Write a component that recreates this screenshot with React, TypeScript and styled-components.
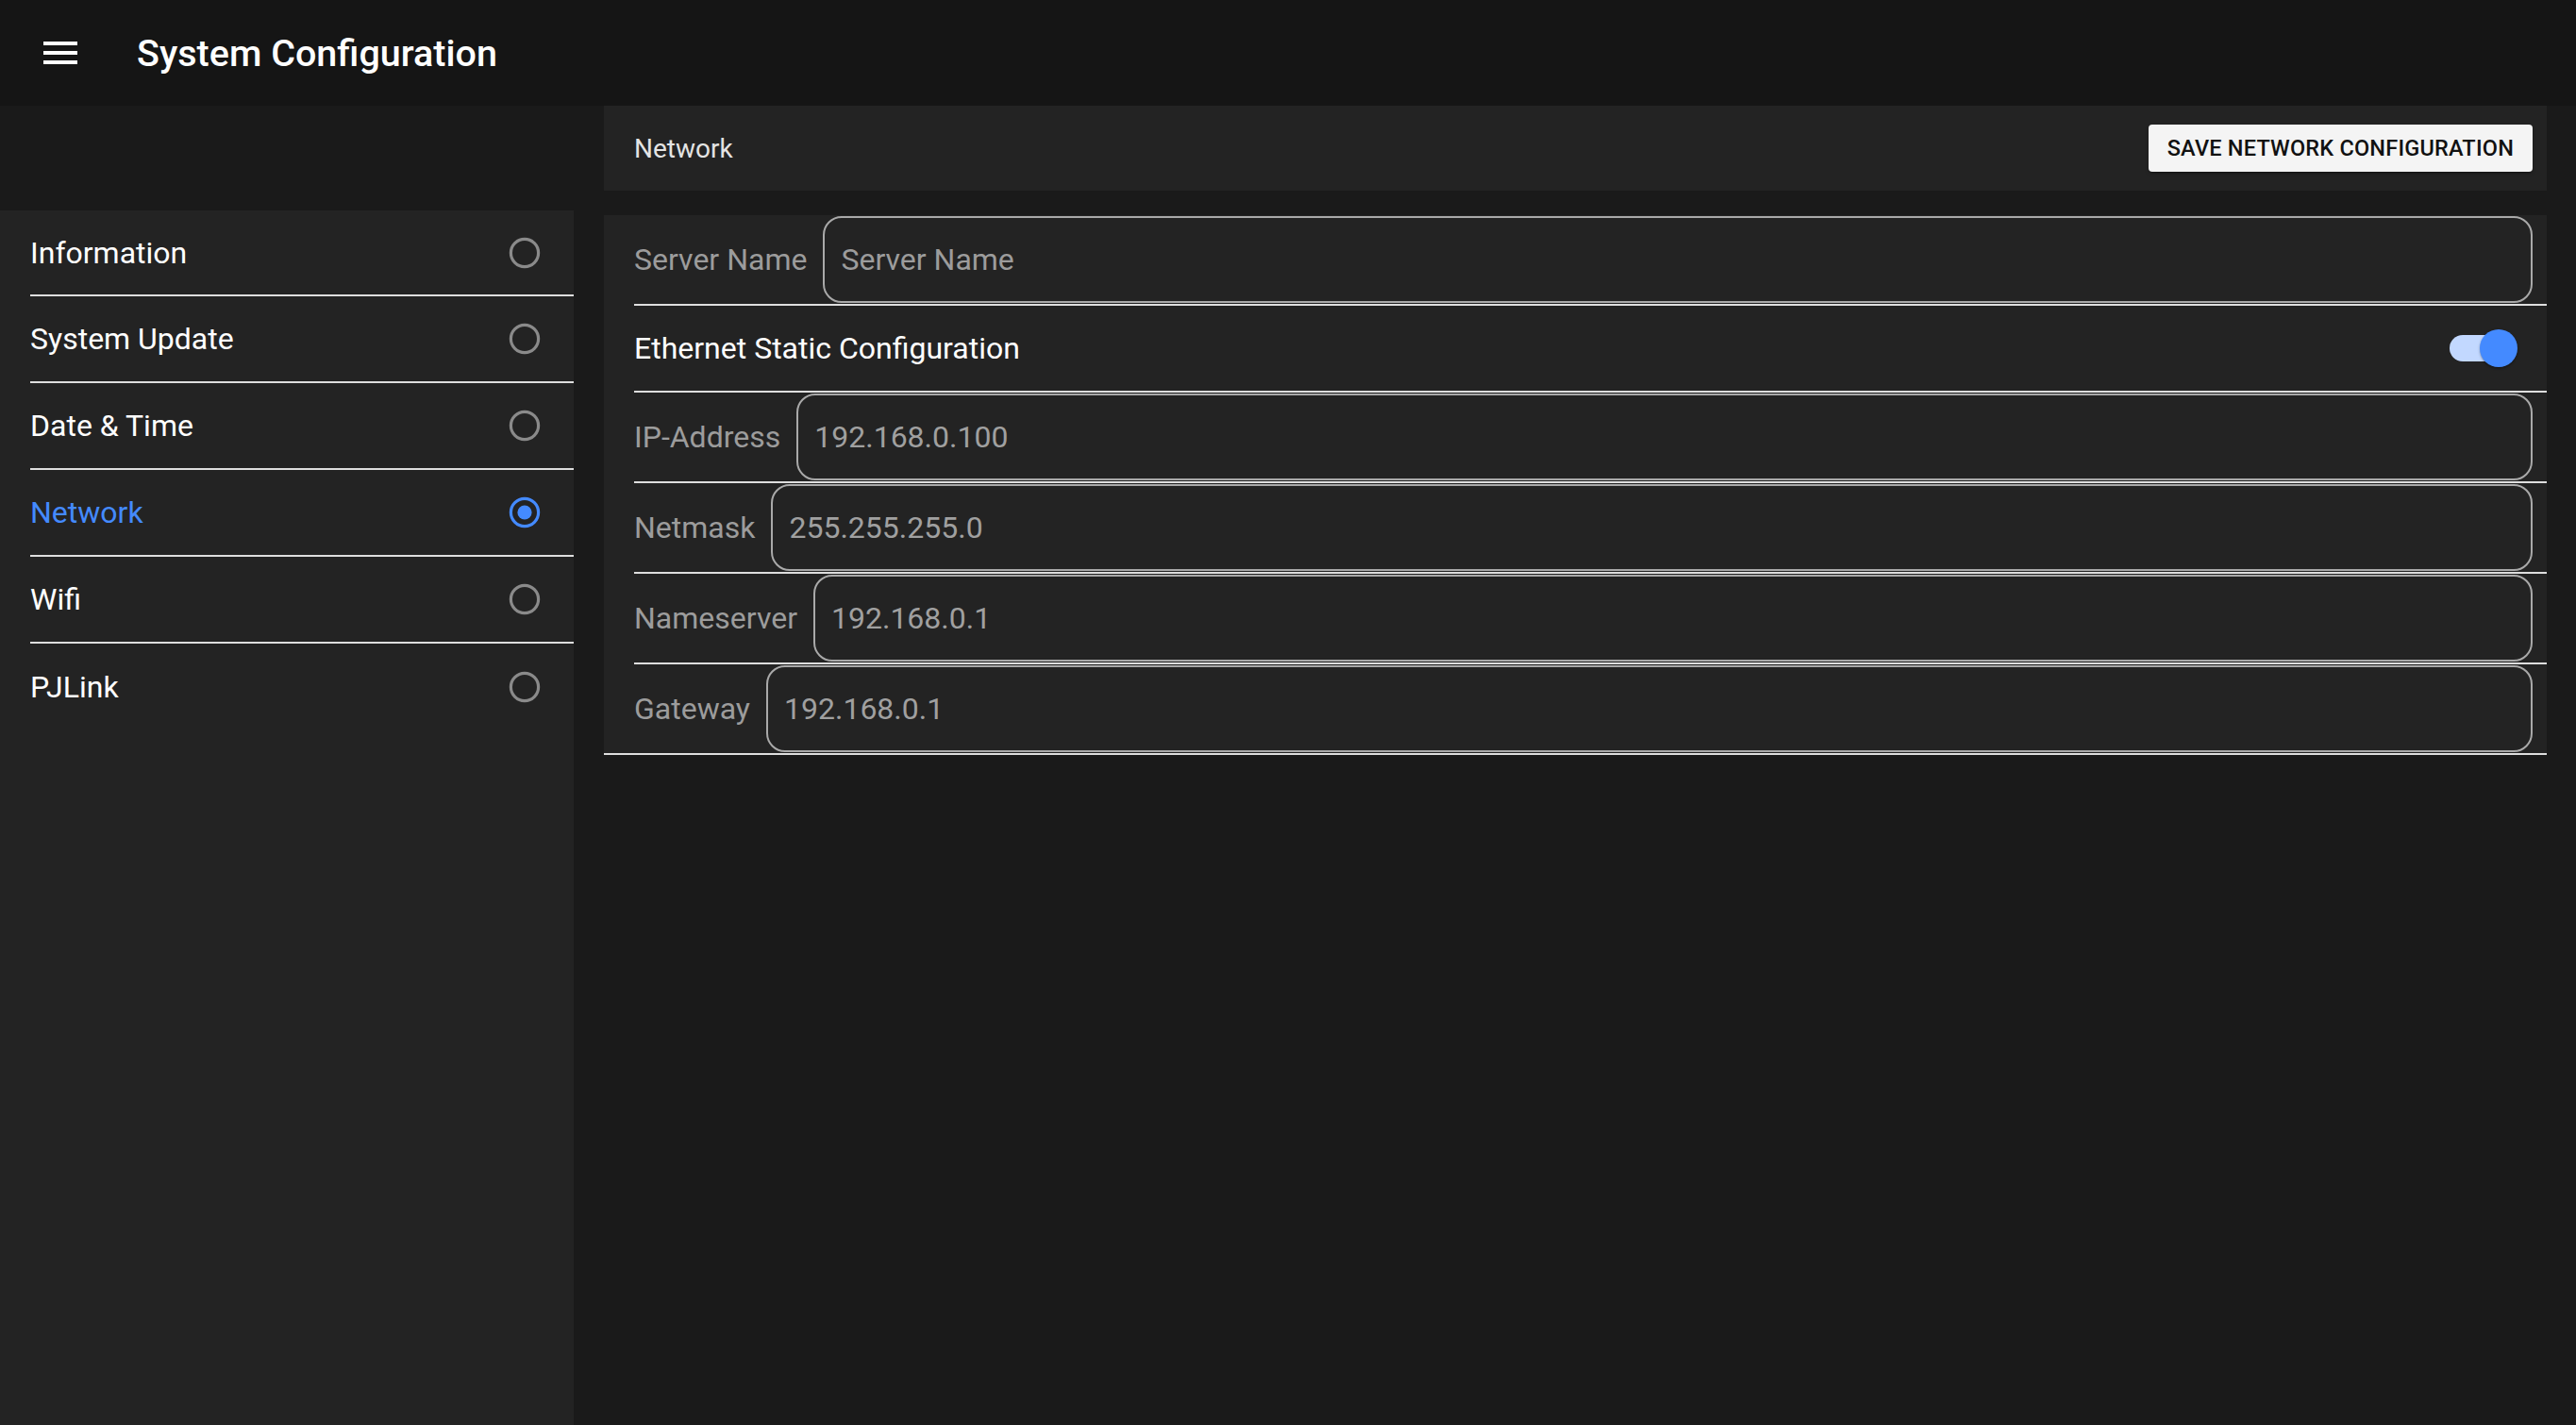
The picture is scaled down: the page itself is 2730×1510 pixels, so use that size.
import React from 'react';
import styled, { createGlobalStyle } from 'styled-components';

const GlobalStyle = createGlobalStyle`
	* {
		box-sizing: border-box;
	}
	body {
		margin: 0;
		background: #1a1a1a;
		font-family: Roboto, 'Liberation Sans', sans-serif;
		color: #ffffff;
	}
`;

const menuItems = ['Information', 'System Update', 'Date & Time', 'Network', 'Wifi', 'PJLink'];

const networkFields = [
	{ label: 'IP-Address', value: '192.168.0.100' },
	{ label: 'Netmask', value: '255.255.255.0' },
	{ label: 'Nameserver', value: '192.168.0.1' },
	{ label: 'Gateway', value: '192.168.0.1' },
];

function RadioIcon({ checked }: { checked: boolean }) {
	const color = checked ? '#448aff' : '#8a8a8a';
	return (
		<svg width="40" height="40" viewBox="0 0 40 40">
			<circle cx="20" cy="20" r="14.6" fill="none" stroke={color} strokeWidth="3.2" />
			{checked && <circle cx="20" cy="20" r="7.6" fill={color} />}
		</svg>
	);
}

export default function App() {
	const active = 'Network';

	return (
		<Page>
			<GlobalStyle />
			<AppBar>
				<MenuButton aria-label="menu">
					<svg width="48" height="48" viewBox="0 0 24 24" fill="#ffffff">
						<path d="M3 18h18v-2H3v2zm0-5h18v-2H3v2zm0-7v2h18V6H3z" />
					</svg>
				</MenuButton>
				<Title>System Configuration</Title>
			</AppBar>
			<Body>
				<Sidebar>
					{menuItems.map((item) => (
						<MenuItem key={item}>
							<MenuText $active={item === active}>{item}</MenuText>
							<RadioIcon checked={item === active} />
						</MenuItem>
					))}
				</Sidebar>
				<Main>
					<PanelHeader>
						<PanelTitle>Network</PanelTitle>
						<SaveButton>Save Network Configuration</SaveButton>
					</PanelHeader>
					<FormPanel>
						<FieldRow>
							<FieldLabel>Server Name</FieldLabel>
							<FieldInput type="text" placeholder="Server Name" />
						</FieldRow>
						<ToggleRow>
							<ToggleLabel>Ethernet Static Configuration</ToggleLabel>
							<Switch>
								<SwitchTrack />
								<SwitchThumb />
							</Switch>
						</ToggleRow>
						{networkFields.map((field) => (
							<FieldRow key={field.label}>
								<FieldLabel>{field.label}</FieldLabel>
								<FieldInput type="text" defaultValue={field.value} />
							</FieldRow>
						))}
					</FormPanel>
				</Main>
			</Body>
		</Page>
	);
}

const Page = styled.div`
	min-height: 100vh;
	display: flex;
	flex-direction: column;
`;

const AppBar = styled.header`
	height: 112px;
	flex-shrink: 0;
	display: flex;
	align-items: center;
	padding-left: 40px;
	background: #151515;
`;

const MenuButton = styled.div`
	width: 48px;
	height: 48px;
	display: flex;
	margin-top: -1px;
`;

const Title = styled.div`
	margin-left: 57px;
	font-size: 39.5px;
	font-weight: 500;
	color: #ffffff;
`;

const Body = styled.div`
	flex: 1;
	display: flex;
`;

const Sidebar = styled.nav`
	width: 608px;
	flex-shrink: 0;
	margin-top: 111px;
	background: #232323;
	padding-left: 32px;
`;

const MenuItem = styled.div`
	height: 92px;
	display: flex;
	align-items: center;
	justify-content: space-between;
	padding-right: 32px;
	border-bottom: 2px solid #dedede;

	&:first-child {
		height: 91px;
	}

	&:last-child {
		border-bottom: none;
	}
`;

const MenuText = styled.span<{ $active: boolean }>`
	font-size: 32px;
	color: ${({ $active }) => ($active ? '#448aff' : '#ffffff')};
`;

const Main = styled.main`
	flex: 1;
	display: flex;
	flex-direction: column;
	gap: 26px;
	padding: 0 31px 0 32px;
`;

const PanelHeader = styled.div`
	height: 90px;
	display: flex;
	align-items: center;
	justify-content: space-between;
	padding: 0 15px 0 32px;
	background: #232323;
`;

const PanelTitle = styled.div`
	font-size: 28px;
	color: #e4e4e4;
`;

const SaveButton = styled.button`
	height: 50px;
	padding: 0 20px;
	border: none;
	border-radius: 4px;
	background: #f4f4f4;
	color: #111111;
	font-family: Roboto, 'Liberation Sans', sans-serif;
	font-size: 23.5px;
	font-weight: 500;
	letter-spacing: 0.2px;
	text-transform: uppercase;
	box-shadow: 0 3px 2px -2px rgba(0, 0, 0, 0.3), 0 2px 4px rgba(0, 0, 0, 0.2);
`;

const FormPanel = styled.section`
	background: #232323;
	padding-left: 32px;
	border-bottom: 2px solid #dedede;
`;

const FieldRow = styled.div`
	height: 96px;
	display: flex;
	align-items: center;
	padding-right: 15px;
	border-bottom: 2px solid #dedede;

	&:last-child {
		border-bottom: none;
		height: 94px;
	}
`;

const FieldLabel = styled.label`
	flex-shrink: 0;
	margin-right: 17px;
	font-size: 32px;
	color: #9c9c9c;
`;

const FieldInput = styled.input`
	flex: 1;
	min-width: 0;
	height: 92px;
	padding: 0 17px;
	border: 2px solid #a9a9a9;
	border-radius: 20px;
	background: transparent;
	font-family: Roboto, 'Liberation Sans', sans-serif;
	font-size: 32px;
	color: #a0a0a0;
	outline: none;

	&::placeholder {
		color: #9c9c9c;
	}
`;

const ToggleRow = styled.div`
	height: 92px;
	display: flex;
	align-items: center;
	justify-content: space-between;
	padding-right: 31px;
	border-bottom: 2px solid #dedede;
`;

const ToggleLabel = styled.span`
	font-size: 32px;
	color: #ffffff;
`;

const Switch = styled.div`
	position: relative;
	width: 72px;
	height: 40px;
`;

const SwitchTrack = styled.span`
	position: absolute;
	left: 0;
	top: 6px;
	width: 68px;
	height: 28px;
	border-radius: 14px;
	background: #c2d8ff;
`;

const SwitchThumb = styled.span`
	position: absolute;
	right: 0;
	top: 0;
	width: 40px;
	height: 40px;
	border-radius: 50%;
	background: #448aff;
	box-shadow: 0 2px 2px -1px rgba(0, 0, 0, 0.3), 0 1px 3px rgba(0, 0, 0, 0.25);
`;
